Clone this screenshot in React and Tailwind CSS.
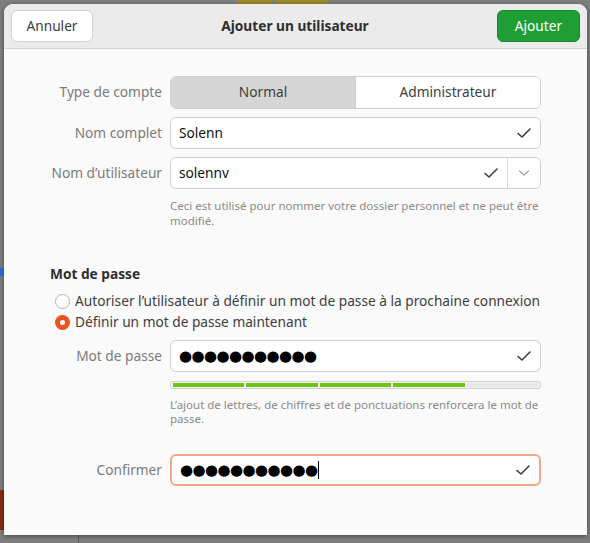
import React from "react";

const Check = () => (
  <svg width="16" height="12" viewBox="0 0 16 12" fill="none">
    <path d="M2 6.5 L6 10 L14 2" stroke="#3d3d3d" strokeWidth="1.6" strokeLinecap="round" strokeLinejoin="round" />
  </svg>
);

const Chevron = () => (
  <svg width="12" height="8" viewBox="0 0 12 8" fill="none">
    <path d="M1.5 2 L6 6 L10.5 2" stroke="#a0a0a0" strokeWidth="1.2" strokeLinecap="round" strokeLinejoin="round" />
  </svg>
);

const Row = ({ label, children, className = "" }) => (
  <div className={"flex items-center " + className}>
    <div className="w-[159px] pr-[1px] text-right text-[#7b7b7b]">{label}</div>
    <div className="ml-[7px] w-[371px]">{children}</div>
  </div>
);

const Input = ({ children, focused }) => (
  <div
    className={
      "flex h-[32px] items-center rounded-[6px] bg-white pl-[8px] pr-[8px] " +
      (focused ? "border-2 border-[#f2a686] pl-[7px] pr-[7px]" : "border border-[#cfcfcf]")
    }
  >
    <div className="flex-1 text-[#111]">{children}</div>
    <Check />
  </div>
);

const Dots = () => (
  <span className="font-['DejaVu_Sans',sans-serif] text-[15px] tracking-[-0.6px] text-black">
    ●●●●●●●●●●●
  </span>
);

export default function App() {
  return (
    <div className="relative h-[543px] w-[590px] overflow-hidden bg-[#7e7e7e] font-['Noto_Sans',sans-serif] text-[13.7px] text-[#3d3d3d]">
      {/* desktop behind the dialog */}
      <div className="absolute left-[237px] top-0 h-[4px] w-[34px] bg-[#9c8a2c]" />
      <div className="absolute left-[276px] top-0 h-[4px] w-[52px] bg-[#9c8a2c]" />
      <div className="absolute left-0 top-[268px] h-[8px] w-[3px] bg-[#2a6fd6]" />
      <div className="absolute left-0 top-[490px] h-[40px] w-[4px] bg-[#8a2c12]" />
      <div className="absolute left-[78px] top-[535px] h-[8px] w-[1px] bg-[#5a5a5a]" />

      <div className="absolute left-[4px] top-[4px] flex h-[531px] w-[583px] flex-col overflow-hidden rounded-t-[9px] bg-[#fafafa] shadow-[0_1px_4px_rgba(0,0,0,0.45)]">
        <div className="flex h-[45px] shrink-0 items-center justify-between border-b border-[#d6d6d6] bg-[#ebebeb] px-[7px]">
          <button className="h-[32px] w-[82px] rounded-[6px] border border-[#d2d2d2] bg-white text-[#3d3d3d]">
            Annuler
          </button>
          <div className="font-bold text-[#2e2e2e]">Ajouter un utilisateur</div>
          <button className="h-[32px] w-[83px] rounded-[6px] border border-[#17862b] bg-[#1f9e35] text-white">
            Ajouter
          </button>
        </div>

        <div className="flex flex-col">
          <Row label="Type de compte" className="mt-[27px]">
            <div className="flex h-[33px] overflow-hidden rounded-[6px] border border-[#cfcfcf]">
              <div className="flex flex-1 items-center justify-center bg-[#d6d6d6]">Normal</div>
              <div className="flex flex-1 items-center justify-center border-l border-[#cfcfcf] bg-white">
                Administrateur
              </div>
            </div>
          </Row>
          <Row label="Nom complet" className="mt-[8px]">
            <Input>Solenn</Input>
          </Row>
          <Row label="Nom d’utilisateur" className="mt-[8px]">
            <div className="flex h-[32px] rounded-[6px] border border-[#cfcfcf] bg-white">
              <div className="flex flex-1 items-center pl-[8px] pr-[8px]">
                <div className="flex-1 text-[#111]">solennv</div>
                <Check />
              </div>
              <div className="flex w-[33px] items-center justify-center border-l border-[#d6d6d6]">
                <Chevron />
              </div>
            </div>
          </Row>
          <div className="ml-[166px] mt-[9px] w-[371px] text-[11.5px] leading-[15px] text-[#8a8a8a]">
            Ceci est utilisé pour nommer votre dossier personnel et ne peut être modifié.
          </div>

          <div className="ml-[46px] mt-[36px] font-bold leading-[20px] text-[#2e2e2e]">Mot de passe</div>
          <div className="ml-[51px] mt-[7px] flex h-[21px] items-center gap-[5px]">
            <span className="h-[15px] w-[15px] rounded-full border border-[#b3b3b3] bg-white" />
            <span>Autoriser l’utilisateur à définir un mot de passe à la prochaine connexion</span>
          </div>
          <div className="ml-[51px] flex h-[21px] items-center gap-[5px]">
            <span className="flex h-[15px] w-[15px] items-center justify-center rounded-full bg-[#e95420]">
              <span className="h-[5px] w-[5px] rounded-full bg-white" />
            </span>
            <span>Définir un mot de passe maintenant</span>
          </div>

          <Row label="Mot de passe" className="mt-[7px]">
            <Input>
              <Dots />
            </Input>
          </Row>
          <div className="ml-[166px] mt-[9px] flex h-[8px] w-[371px] gap-[2px] rounded-[3px] border border-[#cfcfcf] bg-[#f4f4f4] px-[2px] py-[1px]">
            <div className="flex-1 bg-[#6cc313]" />
            <div className="flex-1 bg-[#6cc313]" />
            <div className="flex-1 bg-[#6cc313]" />
            <div className="flex-1 bg-[#6cc313]" />
            <div className="flex-1 bg-[#e8e8e8]" />
          </div>
          <div className="ml-[166px] mt-[9px] w-[371px] text-[11.5px] leading-[14px] text-[#8a8a8a]">
            L’ajout de lettres, de chiffres et de ponctuations renforcera le mot de passe.
          </div>

          <Row label="Confirmer" className="mt-[28px]">
            <Input focused>
              <span className="flex items-center">
                <Dots />
                <span className="ml-[1px] h-[18px] w-[1px] bg-black" />
              </span>
            </Input>
          </Row>
        </div>
      </div>
    </div>
  );
}
